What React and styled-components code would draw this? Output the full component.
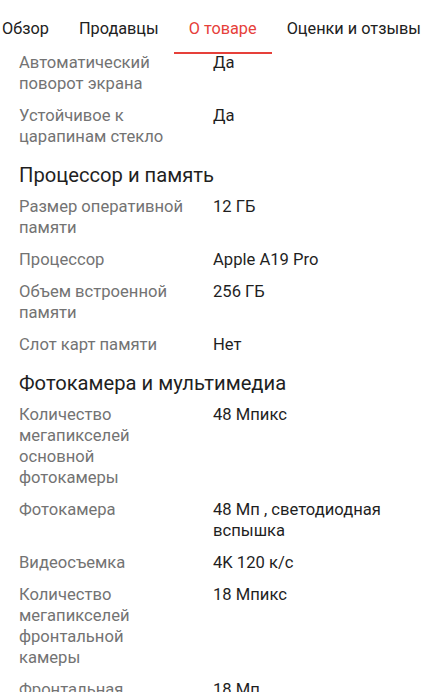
import React from 'react';
import styled, { createGlobalStyle } from 'styled-components';

const GlobalStyle = createGlobalStyle`
  html, body {
    margin: 0;
    padding: 0;
    background: #fff;
  }

  body {
    font-family: Roboto, "Noto Sans", Arial, sans-serif;
    -webkit-font-smoothing: antialiased;
  }
`;

const Screen = styled.div`
  height: 692px;
  overflow: hidden;
  background: #fff;
`;

const TabBar = styled.div`
  overflow: hidden;
  height: 54px;
  background: #fff;
`;

const TabList = styled.div`
  display: flex;
  margin-left: -13px;
  height: 100%;
`;

const Tab = styled.div`
  flex: none;
  display: flex;
  align-items: flex-start;
  box-sizing: border-box;
  height: 100%;
  padding: 18px 15px 0;
  font-size: 16.3px;
  line-height: 21px;
  white-space: nowrap;
  color: ${({ active }) => (active ? '#e6403a' : '#212121')};
  border-bottom: 2px solid ${({ active }) => (active ? '#e6403a' : 'transparent')};
`;

const Content = styled.div`
  display: flex;
  flex-direction: column;
  padding: 0 19px;
  margin-top: -2px;
`;

const Section = styled.section`
  display: flex;
  flex-direction: column;
`;

const SectionTitle = styled.h2`
  margin: 0;
  padding: 4px 0 8px;
  font-size: 20.2px;
  line-height: 26px;
  font-weight: 400;
  color: #1f1f1f;
`;

const Row = styled.div`
  display: grid;
  grid-template-columns: 165px 1fr;
  column-gap: 29px;
  padding-bottom: 11px;
  font-size: 16.6px;
  line-height: 21px;
`;

const Label = styled.div`
  color: #737373;
`;

const Value = styled.div`
  color: #1f1f1f;
`;

const tabs = ['Обзор', 'Продавцы', 'О товаре', 'Оценки и отзывы'];

const sections = [
  {
    rows: [
      ['Автоматический поворот экрана', 'Да'],
      ['Устойчивое к царапинам стекло', 'Да'],
    ],
  },
  {
    title: 'Процессор и память',
    rows: [
      ['Размер оперативной памяти', '12 ГБ'],
      ['Процессор', 'Apple A19 Pro'],
      ['Объем встроенной памяти', '256 ГБ'],
      ['Слот карт памяти', 'Нет'],
    ],
  },
  {
    title: 'Фотокамера и мультимедиа',
    rows: [
      ['Количество мегапикселей основной фотокамеры', '48 Мпикс'],
      ['Фотокамера', '48 Мп , светодиодная вспышка'],
      ['Видеосъемка', '4K 120 к/с'],
      ['Количество мегапикселей фронтальной камеры', '18 Мпикс'],
      ['Фронтальная фотокамера', '18 Мп'],
    ],
  },
];

const App = () => (
  <Screen>
    <GlobalStyle />
    <TabBar>
      <TabList>
        {tabs.map(tab => (
          <Tab key={tab} active={tab === 'О товаре'}>
            {tab}
          </Tab>
        ))}
      </TabList>
    </TabBar>
    <Content>
      {sections.map((section, i) => (
        <Section key={i}>
          {section.title && <SectionTitle>{section.title}</SectionTitle>}
          {section.rows.map(([label, value]) => (
            <Row key={label}>
              <Label>{label}</Label>
              <Value>{value}</Value>
            </Row>
          ))}
        </Section>
      ))}
    </Content>
  </Screen>
);

export default App;
